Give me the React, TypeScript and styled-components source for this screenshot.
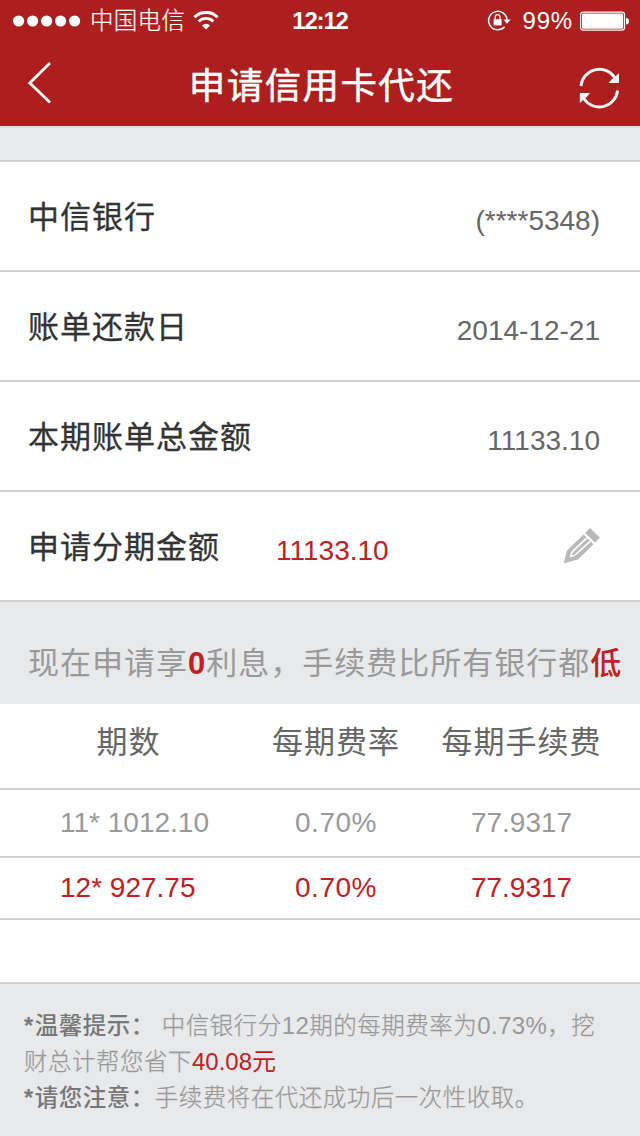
import React from "react";
import styled, { createGlobalStyle } from "styled-components";

const GlobalStyle = createGlobalStyle`
  * { box-sizing: border-box; }
  body {
    margin: 0;
    background: #e8e9eb;
    font-family: "Liberation Sans", "Noto Sans CJK SC", sans-serif;
  }
`;

const RED = "#ac1f1e";
const ACCENT = "#c02022";
const LINE = "#cfcfcf";

const Screen = styled.div`
  width: 640px;
  height: 1136px;
  display: flex;
  flex-direction: column;
  overflow: hidden;
  background: #e8e9eb;
`;

const Header = styled.header`
  height: 128px;
  background: ${RED};
  border-bottom: 2px solid #d9dce0;
  color: #fff;
`;

const StatusBar = styled.div`
  height: 40px;
  padding: 0 11px 0 12px;
  display: grid;
  grid-template-columns: 1fr auto 1fr;
  align-items: center;
`;

const StatusGroup = styled.div<{ $end?: boolean }>`
  display: flex;
  align-items: center;
  height: 40px;
  justify-content: ${(p) => (p.$end ? "flex-end" : "flex-start")};
`;

const Carrier = styled.span`
  font-size: 23.5px;
  font-weight: 300;
  line-height: 40px;
  letter-spacing: 0.3px;
  margin: 0 8px 0 9px;
  -webkit-text-stroke: 0.2px currentColor;
`;

const Clock = styled.span`
  font-size: 24px;
  font-weight: 700;
  line-height: 42px;
  letter-spacing: -1.2px;
  padding-right: 1px;
`;

const Percent = styled.span`
  font-size: 24px;
  line-height: 42px;
  letter-spacing: 0.8px;
  margin: 0 7px 0 12px;
`;

const NavBar = styled.nav`
  height: 86px;
  padding: 0 20px 0 27px;
  display: grid;
  grid-template-columns: 42px 1fr 42px;
  align-items: center;
`;

const Title = styled.h1`
  margin: 0;
  padding: 8px 4px 0 0;
  text-align: center;
  font-size: 36.5px;
  font-weight: 400;
  line-height: 78px;
  letter-spacing: 1.4px;
  -webkit-text-stroke: 0.5px currentColor;
`;

const Spacer = styled.div`
  height: 34px;
  border-bottom: 2px solid ${LINE};
`;

const Row = styled.div`
  height: 110px;
  padding: 0 40px 0 28px;
  display: flex;
  align-items: center;
  background: #fff;
  border-bottom: 2px solid ${LINE};
`;

const Label = styled.span`
  padding-top: 4px;
  font-size: 31px;
  font-weight: 400;
  line-height: 104px;
  letter-spacing: 1px;
  color: #333;
  -webkit-text-stroke: 0.3px currentColor;
`;

const Value = styled.span<{ $accent?: boolean }>`
  font-size: 28px;
  line-height: 44px;
  padding-top: 10px;
  margin-left: ${(p) => (p.$accent ? "56px" : "auto")};
  color: ${(p) => (p.$accent ? ACCENT : "#666")};
`;

const EditIcon = styled.svg`
  margin-left: auto;
`;

const Notice = styled.div`
  height: 102px;
  padding: 22px 0 0 28px;
  font-size: 31px;
  line-height: 80px;
  letter-spacing: 1px;
  color: #999;
  white-space: nowrap;
`;

const Strong = styled.strong`
  color: ${ACCENT};
  font-weight: 700;
`;

const LowMark = styled(Strong)`
  font-weight: 500;
`;

const TableRow = styled.div<{ $height: number; $color: string; $head?: boolean }>`
  height: ${(p) => p.$height}px;
  display: grid;
  grid-template-columns: 257px 158px 225px;
  align-items: center;
  background: #fff;
  border-bottom: 2px solid ${LINE};
  color: ${(p) => p.$color};
  font-size: ${(p) => (p.$head ? 31 : 28)}px;
  letter-spacing: ${(p) => (p.$head ? 1 : 0)}px;
  padding-bottom: ${(p) => (p.$head ? 13 : 1)}px;
  text-align: center;
`;

const Term = styled.span`
  text-align: left;
  padding-left: 60px;
`;

const Cell = styled.span<{ $last?: boolean }>`
  padding-right: ${(p) => (p.$last ? 12 : 0)}px;
`;

const Rate = styled(Cell)`
  letter-spacing: 0.5px;
`;

const Footer = styled.footer`
  padding: 24px 24px 0;
  font-size: 23.5px;
  font-weight: 300;
  letter-spacing: 0.5px;
  line-height: 36px;
  color: #999;
  white-space: nowrap;
  -webkit-text-stroke: 0.25px currentColor;
`;

const Line = styled.div``;

const Tip = styled.b`
  font-weight: 500;
  color: #777;
  -webkit-text-stroke: 0;
`;

const Star = styled.span`
  font-weight: 700;
  letter-spacing: 1.5px;
`;

const Colon = styled.span<{ $gap: number }>`
  font-weight: 400;
  color: #777;
  margin-right: ${(p) => p.$gap}px;
`;

const Num = styled.span`
  font-size: 24px;
  font-weight: 400;
  letter-spacing: 0.4px;
  -webkit-text-stroke: 0;
`;

const Saved = styled.span`
  font-size: 24px;
  font-weight: 400;
  letter-spacing: 0;
  color: ${ACCENT};
  -webkit-text-stroke: 0;
`;

const Signal = () => (
  <svg width="69" height="14" viewBox="0 0 69 14" fill="#fff">
    {[0, 1, 2, 3, 4].map((i) => (
      <circle key={i} cx={6.6 + i * 14} cy="7" r="5.6" />
    ))}
  </svg>
);

const Wifi = () => (
  <svg width="26" height="20" viewBox="0 0 26 20" fill="none" stroke="#fff">
    <path d="M1.4 6.2A16.4 16.4 0 0 1 24.6 6.2" strokeWidth="3" />
    <path d="M5.6 10.4A10.5 10.5 0 0 1 20.4 10.4" strokeWidth="2.8" />
    <path d="M13 18.6L8.9 14.4A5.8 5.8 0 0 1 17.1 14.4Z" fill="#fff" stroke="none" />
  </svg>
);

const RotationLock = () => (
  <svg width="24" height="22" viewBox="0 0 24 22" fill="none" stroke="#fff">
    <path d="M17.6 16.8A9.2 9.2 0 1 1 20 10" strokeWidth="1.5" />
    <path d="M16.4 9.6H23.6L20 13.8Z" fill="#fff" stroke="none" />
    <rect x="6.6" y="9.2" width="8" height="6.2" fill="#fff" stroke="none" />
    <path d="M8.2 9.8V7a2.4 2.4 0 0 1 4.8 0V9.8" strokeWidth="1.3" />
  </svg>
);

const Battery = () => (
  <svg width="49" height="20" viewBox="0 0 49 20">
    <rect x="0.6" y="1.1" width="44" height="18" rx="2.6" fill="none" stroke="#fff" strokeWidth="1.1" />
    <rect x="2" y="2.4" width="41.2" height="15.4" rx="1.4" fill="#fff" />
    <path d="M46 7q3 0 3 3.2t-3 3.4Z" fill="#fff" />
  </svg>
);

const Back = () => (
  <svg width="26" height="44" viewBox="0 0 26 44" fill="none" stroke="#fff" strokeWidth="2.8">
    <path d="M23 2L2.8 22L23 41.4" />
  </svg>
);

const RefreshIcon = styled.svg`
  margin-top: 9px;
`;

const Refresh = () => (
  <RefreshIcon width="42" height="44" viewBox="0 0 42 44" fill="none" stroke="#f4f4f4" strokeWidth="2.9">
    <path d="M3 20A18.4 18.4 0 0 1 36.5 11.2" />
    <path d="M39.6 24.5A18.4 18.4 0 0 1 6 32.8" />
    <path d="M41 7.2V17H30.6L33.6 13.6Z" fill="#f4f4f4" stroke="none" />
    <path d="M1.8 27H12L9.2 30.4L1.8 37Z" fill="#f4f4f4" stroke="none" />
  </RefreshIcon>
);

const Pencil = () => (
  <EditIcon width="37" height="36" viewBox="0 0 37 36">
    <path d="M0.8 35.2L3.8 22.8L20.6 6.4L30.4 16.2L15 31.4Z" fill="#b9b9b9" />
    <path d="M27 0L36.8 9.5L32 14.6L22.2 5Z" fill="#b9b9b9" />
    <path d="M24.2 9.6L10.4 22.6Q7.8 25.4 7.6 28.4Q10.8 28.2 13.4 26L27.6 12.8" fill="none" stroke="#fff" strokeWidth="1.6" />
  </EditIcon>
);

const details = [
  { label: "中信银行", value: "(****5348)" },
  { label: "账单还款日", value: "2014-12-21" },
  { label: "本期账单总金额", value: "11133.10" },
];

const plans = [
  { term: "11* 1012.10", rate: "0.70%", fee: "77.9317", height: 68, color: "#999" },
  { term: "12* 927.75", rate: "0.70%", fee: "77.9317", height: 62, color: ACCENT },
];

export default function App() {
  return (
    <Screen>
      <GlobalStyle />
      <Header>
        <StatusBar>
          <StatusGroup>
            <Signal />
            <Carrier>中国电信</Carrier>
            <Wifi />
          </StatusGroup>
          <Clock>12:12</Clock>
          <StatusGroup $end>
            <RotationLock />
            <Percent>99%</Percent>
            <Battery />
          </StatusGroup>
        </StatusBar>
        <NavBar>
          <Back />
          <Title>申请信用卡代还</Title>
          <Refresh />
        </NavBar>
      </Header>
      <Spacer />
      {details.map((d) => (
        <Row key={d.label}>
          <Label>{d.label}</Label>
          <Value>{d.value}</Value>
        </Row>
      ))}
      <Row>
        <Label>申请分期金额</Label>
        <Value $accent>11133.10</Value>
        <Pencil />
      </Row>
      <Notice>
        现在申请享<Strong>0</Strong>利息，手续费比所有银行都<LowMark>低</LowMark>
      </Notice>
      <TableRow $height={86} $color="#666" $head>
        <Cell>期数</Cell>
        <Cell>每期费率</Cell>
        <Cell $last>每期手续费</Cell>
      </TableRow>
      {plans.map((p) => (
        <TableRow key={p.term} $height={p.height} $color={p.color}>
          <Term>{p.term}</Term>
          <Rate>{p.rate}</Rate>
          <Cell $last>{p.fee}</Cell>
        </TableRow>
      ))}
      <TableRow $height={64} $color="#999" />
      <Footer>
        <Line>
          <Tip>
            <Star>*</Star>温馨提示
          </Tip>
          <Colon $gap={7}>：</Colon>
          中信银行分<Num>12</Num>期的每期费率为<Num>0.73%</Num>，挖
        </Line>
        <Line>
          财总计帮您省下<Saved>40.08元</Saved>
        </Line>
        <Line>
          <Tip>
            <Star>*</Star>请您注意
          </Tip>
          <Colon $gap={0}>：</Colon>
          手续费将在代还成功后一次性收取。
        </Line>
      </Footer>
    </Screen>
  );
}
